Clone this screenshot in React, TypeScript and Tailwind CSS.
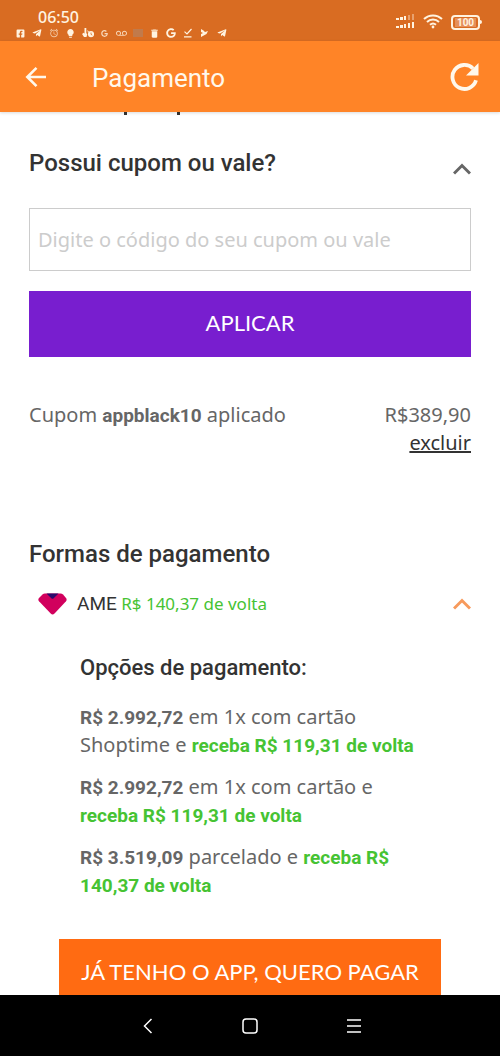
import React, { useState } from 'react';
import { FaFacebookSquare, FaTelegramPlane, FaGoogle } from 'react-icons/fa';
import { MdAlarm, MdDelete, MdLightbulb, MdVoicemail } from 'react-icons/md';

type PaymentOption = {
  price: string;
  text: string;
  cashback: string;
};

const paymentOptions: PaymentOption[] = [
  { price: 'R$ 2.992,72', text: 'em 1x com cartão Shoptime e', cashback: 'receba R$ 119,31 de volta' },
  { price: 'R$ 2.992,72', text: 'em 1x com cartão e', cashback: 'receba R$ 119,31 de volta' },
  { price: 'R$ 3.519,09', text: 'parcelado e', cashback: 'receba R$ 140,37 de volta' },
];

const Chevron = ({ className }: { className: string }) => (
  <svg viewBox="0 0 18 12" className={`h-3 w-[18px] ${className}`} fill="none" stroke="currentColor" strokeWidth="3">
    <path d="M1 10.5 9 2.5l8 8" />
  </svg>
);

const notificationIcons = [
  <FaFacebookSquare size={9} />,
  <FaTelegramPlane size={10} />,
  <MdAlarm size={10} className="opacity-70" />,
  <MdLightbulb size={11} />,
  <svg width="12" height="10" viewBox="0 0 12 10" fill="currentColor">
    <path d="M2.5 0h1.8v5.2l1 .8-.8 3H2L.2 6.2l.9-1.5 1.4.9zM9 3a3 3 0 1 0 .1 6.2A3 3 0 0 0 9 3zM5.3 2l1.6 1.6-1 1z" />
    <path d="M9 4.6v1.7l1.2.8" stroke="#d96c22" strokeWidth=".8" fill="none" />
  </svg>,
  <FaGoogle size={7} className="opacity-80" />,
  <MdVoicemail size={11} className="opacity-80" />,
  <span className="h-2 w-2.5 bg-[#c17a4b]" />,
  <MdDelete size={11} />,
  <FaGoogle size={10} />,
  <svg width="10" height="10" viewBox="0 0 10 10" fill="none" stroke="currentColor" strokeWidth="1.2">
    <path d="M1.5 3.6 4 6l4.5-5M1 8.8h7.5" />
  </svg>,
  <svg width="9" height="10" viewBox="0 0 9 10" fill="currentColor">
    <path d="M1 1l2.5 1.5L5 4l3-1-1.5 3L1 9V6l2-1-2-1z" />
  </svg>,
  <FaTelegramPlane size={10} />,
];

const StatusBar = () => (
  <div className="flex h-[41px] shrink-0 justify-between bg-[#d96c22] pr-[18px] pl-4 text-[#fff3e0]">
    <div className="pt-2">
      <div className="pl-[22px] font-['Noto_Sans'] text-[16px] leading-[18px] font-medium">06:50</div>
      <div className="flex h-3.5 w-[210px] items-center justify-between">
        {notificationIcons.map((icon, i) => (
          <span key={i} className="flex w-[9px] justify-center">
            <span className="flex shrink-0">{icon}</span>
          </span>
        ))}
      </div>
    </div>
    <div className="flex items-center gap-2 pt-[3px]">
      <svg width="20" height="16" viewBox="0 0 20 16" fill="currentColor">
        <path d="M1 4h3v2H1zM5 3h3v3H5zM9 2h2v4H9z" />
        <path d="M13 1h2v5h-2zM17 0h2v6h-2z" opacity=".4" />
        <path d="M1 12h3v2H1zM5 11h3v3H5zM9 10h2v4H9zM13 9h2v5h-2zM17 8h2v6h-2z" />
      </svg>
      <svg width="20" height="16" viewBox="0 0 20 16" fill="none" stroke="currentColor" strokeWidth="2">
        <path d="M1 5a13 13 0 0 1 18 0M4 8a8.5 8.5 0 0 1 12 0M7 10.8a4.5 4.5 0 0 1 6 0" />
        <circle cx="10" cy="13" r="1.4" fill="currentColor" stroke="none" />
      </svg>
      <div className="flex items-center">
        <div className="flex h-[15px] w-[29px] items-center justify-center rounded-[4px] border-2 border-[#fff3e0] font-['Roboto'] text-[10px] font-bold">
          <span className="bg-[#e5905a] px-0.5 leading-[9px]">100</span>
        </div>
        <div className="h-1 w-0.5 rounded-r bg-[#fff3e0]" />
      </div>
    </div>
  </div>
);

const AppBar = () => (
  <header className="z-10 flex h-[71px] shrink-0 items-center bg-[#ff8427] pr-[21px] pl-[25px] text-[#fff8ec] shadow-[0_1px_3px_rgba(0,0,0,0.15)]">
    <button type="button" aria-label="Voltar">
      <svg width="22" height="22" viewBox="0 0 22 22" fill="none" stroke="currentColor" strokeWidth="2.6">
        <path d="M21 11H3M11.5 1.8 2.3 11l9.2 9.2" />
      </svg>
    </button>
    <h1 className="ml-[45px] flex-1 pt-0.5 font-['Roboto'] text-[26px] leading-8">Pagamento</h1>
    <button type="button" aria-label="Atualizar">
      <svg width="29" height="29" viewBox="0 0 29 29">
        <path d="M26 18.3A12 12 0 1 1 23 6.5" fill="none" stroke="currentColor" strokeWidth="3.8" />
        <path d="M28.5 1v12.5H16z" fill="currentColor" />
      </svg>
    </button>
  </header>
);

const NavBar = () => (
  <nav className="flex h-[61px] shrink-0 items-center justify-center gap-[84px] bg-black text-white">
    <button type="button" aria-label="Voltar">
      <svg width="20" height="20" viewBox="0 0 20 20" fill="none" stroke="currentColor" strokeWidth="1.5">
        <path d="M15.5 3l-7 7 7 7" />
      </svg>
    </button>
    <button type="button" aria-label="Início">
      <svg width="20" height="20" viewBox="0 0 20 20" fill="none" stroke="currentColor" strokeWidth="1.5">
        <rect x="3" y="3" width="14" height="14" rx="3" />
      </svg>
    </button>
    <button type="button" aria-label="Recentes">
      <svg width="20" height="20" viewBox="0 0 20 20" fill="none" stroke="currentColor" strokeWidth="1.5">
        <path d="M3 4h14M3 10h14M3 16h14" />
      </svg>
    </button>
  </nav>
);

const App = () => {
  const [coupon, setCoupon] = useState('');
  const [couponOpen, setCouponOpen] = useState(true);
  const [ameOpen, setAmeOpen] = useState(true);

  return (
    <div className="flex h-screen flex-col bg-white font-['Noto_Sans',sans-serif] text-[20px] leading-7 text-[#666]">
      <StatusBar />
      <AppBar />

      <main className="flex-1 overflow-y-auto px-[29px] [scrollbar-width:none]">
        {/* final da seção anterior, escondida pela rolagem */}
        <div className="flex h-[3px] gap-[50px] pl-[95px]">
          <span className="w-[3px] bg-[#333]" />
          <span className="w-[3px] bg-[#333]" />
        </div>

        <section className="mt-[34px]">
          <div className="flex items-center justify-between">
            <h2 className="font-['Roboto'] text-[24px] font-medium text-[#333]">Possui cupom ou vale?</h2>
            <button type="button" aria-label="Abrir cupom" className="pt-3" onClick={() => setCouponOpen(!couponOpen)}>
              <Chevron className="text-[#666]" />
            </button>
          </div>

          {couponOpen && (
            <form className="mt-[31px]" onSubmit={(e) => e.preventDefault()}>
              <input
                type="text"
                aria-label="Código do cupom ou vale"
                value={coupon}
                onChange={(e) => setCoupon(e.target.value)}
                placeholder="Digite o código do seu cupom ou vale"
                className="block h-[63px] w-full border border-[#ccc] px-2 placeholder:text-[#ccc] focus:outline-none"
              />
              <button type="submit" className="mt-5 h-[66px] w-full bg-[#781ecf] pb-0.5 font-['Lato'] text-[22px] text-white">
                APLICAR
              </button>
            </form>
          )}

          <div className="mt-11 flex justify-between">
            <p>
              Cupom <strong className="font-['Roboto'] text-[19px] leading-none font-bold">appblack10</strong> aplicado
            </p>
            <div className="text-right">
              <p>R$389,90</p>
              <a href="#" className="block text-[#333] underline">excluir</a>
            </div>
          </div>
        </section>

        <section className="mt-[83px]">
          <h2 className="font-['Roboto'] text-[24px] font-medium text-[#333]">Formas de pagamento</h2>

          <div className="mt-[22px] flex items-center pl-[9px]">
            <svg width="29" height="22" viewBox="0 0 29 22">
              <path d="M7 .5h15.5q1.5 0 2.5 1l3 3.5q1.3 1.7 0 3.3L16.5 20.5q-1.9 1.8-3.8 0L1 8.3Q-.3 6.7 1 5l3.5-3.5q1-1 2.5-1z" fill="#d1005d" />
              <path d="M8.5.5h12L15.7 5.3q-1.2 1-2.4 0z" fill="#2b0a6b" />
            </svg>
            <p className="ml-2.5 flex-1 text-[17px] text-[#46c333]">
              <span className="font-['Roboto'] text-[19px] leading-none text-[#333]">AME</span> R$ 140,37 de volta
            </p>
            <button type="button" aria-label="Abrir AME" onClick={() => setAmeOpen(!ameOpen)}>
              <Chevron className="text-[#f79a5c]" />
            </button>
          </div>

          {ameOpen && (
            <div className="mt-9 pr-[45px] pl-[51px]">
              <h3 className="font-['Roboto'] text-[22px] font-medium text-[#333]">Opções de pagamento:</h3>
              <div className="mt-[21px] space-y-3.5">
                {paymentOptions.map((option, i) => (
                  <p key={i}>
                    <strong className="font-['Roboto'] text-[19px] leading-none font-bold">{option.price}</strong> {option.text}{' '}
                    <strong className="font-['Roboto'] text-[19px] leading-none font-bold text-[#46c333]">{option.cashback}</strong>
                  </p>
                ))}
              </div>
            </div>
          )}

          <div className="mt-10 px-[30px]">
            <button type="button" className="h-[66px] w-full bg-[#ff6b12] font-['Lato'] text-[22px] whitespace-nowrap text-white">
              JÁ TENHO O APP, QUERO PAGAR
            </button>
          </div>
        </section>
      </main>

      <NavBar />
    </div>
  );
};

export default App;
